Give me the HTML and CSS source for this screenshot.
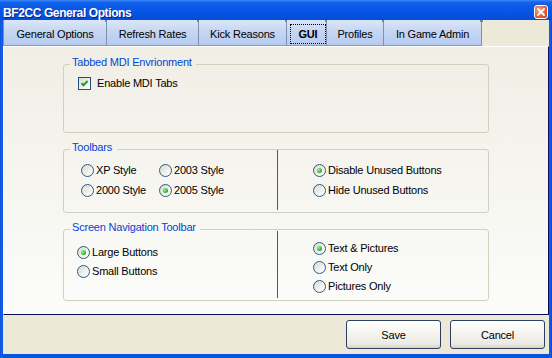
FILE: index.html
```html
<!DOCTYPE html>
<html>
<head>
<meta charset="utf-8">
<title>BF2CC General Options</title>
<link rel="stylesheet" href="styles.css">
</head>
<body>
<div class="window">
  <div class="titlebar">
    <span class="title">BF2CC General Options</span>
    <span class="close"><svg width="8" height="8" viewBox="0 0 8 8"><path d="M1 1L7 7M7 1L1 7" stroke="#fff" stroke-width="1.8" stroke-linecap="square"/></svg></span>
  </div>
  <div class="frame">
    <div class="tabs">
      <div class="tab tab-general">General Options</div>
      <div class="tab tab-refresh">Refresh Rates</div>
      <div class="tab tab-kick">Kick Reasons</div>
      <div class="tab tab-gui active"><span class="focus">GUI</span></div>
      <div class="tab tab-profiles">Profiles</div>
      <div class="tab tab-admin">In Game Admin</div>
    </div>
    <div class="page">
      <fieldset class="group">
        <legend>Tabbed MDI Envrionment</legend>
        <div class="mdi-body">
          <label class="opt check-opt"><span class="checkbox"><svg width="11" height="11" viewBox="0 0 11 11"><path d="M2.5 5.2L4.5 7.3L8.6 3" fill="none" stroke="#21a121" stroke-width="2"/></svg></span>Enable MDI Tabs</label>
        </div>
      </fieldset>
      <fieldset class="group">
        <legend class="legend-toolbars">Toolbars</legend>
        <div class="split split-toolbars">
          <div class="left style-grid">
            <label class="opt"><span class="radio"></span>XP Style</label>
            <label class="opt"><span class="radio"></span>2003 Style</label>
            <label class="opt"><span class="radio"></span>2000 Style</label>
            <label class="opt"><span class="radio on"></span>2005 Style</label>
          </div>
          <div class="sep sep-toolbars"></div>
          <div class="right stack stack-toolbars">
            <label class="opt"><span class="radio on"></span>Disable Unused Buttons</label>
            <label class="opt"><span class="radio"></span>Hide Unused Buttons</label>
          </div>
        </div>
      </fieldset>
      <fieldset class="group">
        <legend>Screen Navigation Toolbar</legend>
        <div class="split split-nav">
          <div class="left stack nav-left">
            <label class="opt"><span class="radio on"></span>Large Buttons</label>
            <label class="opt"><span class="radio"></span>Small Buttons</label>
          </div>
          <div class="sep sep-nav"></div>
          <div class="right stack nav-right">
            <label class="opt"><span class="radio on"></span>Text &amp; Pictures</label>
            <label class="opt"><span class="radio"></span>Text Only</label>
            <label class="opt"><span class="radio"></span>Pictures Only</label>
          </div>
        </div>
      </fieldset>
    </div>
    <div class="footer">
      <button class="btn">Save</button>
      <button class="btn">Cancel</button>
    </div>
  </div>
</div>
</body>
</html>
```
FILE: styles.css
```css
* { box-sizing: border-box; }
html, body { margin: 0; padding: 0; }
body {
  width: 552px;
  height: 358px;
  overflow: hidden;
  font-family: "Liberation Sans", Arial, sans-serif;
  font-size: 11px;
  letter-spacing: -0.2px;
  color: #000;
}
.window {
  width: 552px;
  height: 358px;
  display: flex;
  flex-direction: column;
  background: linear-gradient(90deg, #0843c8 0, #1a62ee 1px, #0a54e2 3px, #0a54e2 549px, #1a62ee 550px, #0843c8 552px);
}
.titlebar {
  height: 20px;
  flex: none;
  display: flex;
  justify-content: space-between;
  align-items: flex-start;
  padding: 0 4px 0 3px;
  background: linear-gradient(#3d8af6 0, #1665ee 2px, #0a5ae8 6px, #0556e4 12px, #024dd8 20px);
}
.title {
  margin-top: 6px;
  line-height: 14px;
  font-size: 12px;
  font-weight: bold;
  letter-spacing: -0.4px;
  color: #fff;
  text-shadow: 1px 1px #0a1f8a;
  white-space: nowrap;
}
.close {
  margin-top: 5px;
  width: 14px;
  height: 14px;
  border: 1px solid #fff;
  border-radius: 3px;
  background: radial-gradient(circle at 35% 35%, #f4a888 0, #e2603a 55%, #c8401a 100%);
  display: flex;
  align-items: center;
  justify-content: center;
}
.close svg { display: block; }
.frame {
  flex: 1;
  display: flex;
  flex-direction: column;
  margin: 0 3px 4px;
  background: #ece9d8;
}
.tabs {
  display: flex;
  height: 26px;
  flex: none;
}
.tab {
  position: relative;
  height: 26px;
  display: flex;
  align-items: center;
  justify-content: center;
  padding-top: 3px;
  border-right: 1px solid #7f91b3;
  border-bottom: 1px solid #8e9ab0;
  background: linear-gradient(#dbe6f8 0%, #c6d6f2 45%, #b7cbef 100%);
  white-space: nowrap;
}
.tab::before {
  content: "";
  position: absolute;
  top: 0;
  right: -2px;
  width: 3px;
  height: 2px;
  background: #6f82a6;
}
.tab-general { width: 104px; border-left: 1px solid #7f91b3; }
.tab-refresh { width: 92px; }
.tab-kick { width: 88px; }
.tab-gui { width: 40px; justify-content: flex-start; padding-left: 3px; }
.tab-profiles { width: 57px; }
.tab-admin { width: 98px; }
.focus {
  width: 36px;
  height: 20px;
  border: 1px dotted #000;
  display: flex;
  align-items: center;
  justify-content: center;
  font-weight: bold;
  font-size: 11px;
}
.page {
  height: 269px;
  flex: none;
  border: 1px solid;
  border-color: #ffffff #0c0c5e #0c0c5e #ffffff;
  background: linear-gradient(#f0eee5, #fcfcfa);
  padding: 9px 0 0 59px;
}
.group {
  width: 426px;
  margin: 0 0 8px;
  padding: 0;
  min-width: 0;
  border: 1px solid #d0d0bf;
  border-radius: 3px;
}
.group legend {
  margin-left: 6px;
  padding: 0 4px 4px 2px;
  line-height: 13px;
  color: #0046d5;
}
.group .legend-toolbars { padding-right: 5px; }
.mdi-body {
  height: 59px;
  padding: 4px 0 0 14px;
}
.opt {
  display: flex;
  align-items: center;
  gap: 2px;
  height: 13px;
  line-height: 13px;
  white-space: nowrap;
}
.check-opt { gap: 6px; }
.checkbox {
  width: 13px;
  height: 13px;
  flex: none;
  border: 1px solid #1c5180;
  background: linear-gradient(135deg, #dcdcd4 0%, #f2f2ee 60%, #ffffff 100%);
  display: flex;
  align-items: center;
  justify-content: center;
}
.checkbox svg { display: block; }
.radio {
  width: 13px;
  height: 13px;
  flex: none;
  border-radius: 50%;
  border: 1px solid #2c5a8a;
  background: linear-gradient(135deg, #d8d8d0 0%, #f2f2ee 60%, #ffffff 100%);
  display: flex;
  align-items: center;
  justify-content: center;
}
.radio.on::after {
  content: "";
  width: 5px;
  height: 5px;
  border-radius: 50%;
  background: radial-gradient(circle at 35% 35%, #9ef09e 0, #2cb82c 60%, #178a17 100%);
}
.split { display: flex; }
.split-toolbars { height: 54px; }
.split-nav { height: 62px; }
.left { width: 213px; flex: none; }
.right { flex: 1; padding-left: 35px; }
.sep {
  width: 1px;
  flex: none;
  background: #2b5cb4;
}
.sep-toolbars { margin: -8px 0 2px; }
.sep-nav { margin: -7px 0 2px; }
.style-grid {
  display: grid;
  grid-template-columns: 78px auto;
  row-gap: 7px;
  align-content: start;
  padding: 6px 0 0 17px;
}
.stack { display: flex; flex-direction: column; }
.stack-toolbars { gap: 7px; padding-top: 6px; }
.nav-left { gap: 6px; padding: 8px 0 0 13px; }
.nav-right { gap: 6px; padding-top: 4px; }
.footer {
  flex: 1;
  display: flex;
  justify-content: flex-end;
  align-items: flex-start;
  gap: 9px;
  padding: 5px 4px 0 0;
}
.btn {
  width: 95px;
  height: 29px;
  padding: 0;
  border: 1px solid #2a3f62;
  border-radius: 3px;
  background: linear-gradient(#ffffff 0%, #f6f5f0 40%, #eceae2 85%, #d8d2c6 100%);
  font-family: "Liberation Sans", Arial, sans-serif;
  font-size: 11px;
  letter-spacing: -0.2px;
  color: #000;
}
```
